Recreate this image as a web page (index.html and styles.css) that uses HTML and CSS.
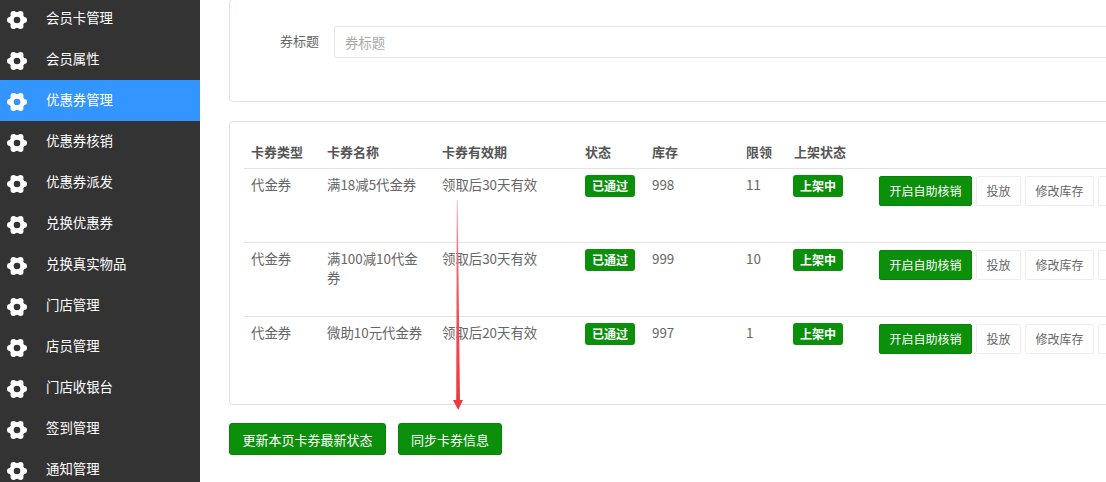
FILE: index.html
```html
<!DOCTYPE html>
<html lang="zh-CN">
<head>
<meta charset="utf-8">
<title>优惠券管理</title>
<link rel="stylesheet" href="styles.css">
</head>
<body>
<svg class="defs" width="0" height="0" aria-hidden="true">
  <symbol id="gear" viewBox="0 0 20 20">
    <circle cx="10" cy="10" r="5.6" fill="none" stroke="#fff" stroke-width="4.6"/>
    <circle cx="17" cy="10" r="3" fill="#fff"/>
    <circle cx="3" cy="10" r="3" fill="#fff"/>
    <circle cx="13.5" cy="3.94" r="3" fill="#fff"/>
    <circle cx="6.5" cy="3.94" r="3" fill="#fff"/>
    <circle cx="13.5" cy="16.06" r="3" fill="#fff"/>
    <circle cx="6.5" cy="16.06" r="3" fill="#fff"/>
  </symbol>
</svg>
<div class="layout">
  <nav class="sidebar">
    <a class="nav-item"><svg class="nav-icon"><use href="#gear"/></svg>会员卡管理</a>
    <a class="nav-item"><svg class="nav-icon"><use href="#gear"/></svg>会员属性</a>
    <a class="nav-item active"><svg class="nav-icon"><use href="#gear"/></svg>优惠券管理</a>
    <a class="nav-item"><svg class="nav-icon"><use href="#gear"/></svg>优惠券核销</a>
    <a class="nav-item"><svg class="nav-icon"><use href="#gear"/></svg>优惠券派发</a>
    <a class="nav-item"><svg class="nav-icon"><use href="#gear"/></svg>兑换优惠券</a>
    <a class="nav-item"><svg class="nav-icon"><use href="#gear"/></svg>兑换真实物品</a>
    <a class="nav-item"><svg class="nav-icon"><use href="#gear"/></svg>门店管理</a>
    <a class="nav-item"><svg class="nav-icon"><use href="#gear"/></svg>店员管理</a>
    <a class="nav-item"><svg class="nav-icon"><use href="#gear"/></svg>门店收银台</a>
    <a class="nav-item"><svg class="nav-icon"><use href="#gear"/></svg>签到管理</a>
    <a class="nav-item"><svg class="nav-icon"><use href="#gear"/></svg>通知管理</a>
  </nav>
  <main class="content">
    <section class="panel panel-form">
      <div class="form-row">
        <label class="form-label">券标题</label>
        <input class="form-input" type="text" placeholder="券标题">
      </div>
    </section>
    <section class="panel panel-table">
      <table class="coupons">
        <colgroup>
          <col class="c-type"><col class="c-name"><col class="c-valid"><col class="c-status"><col class="c-stock"><col class="c-limit"><col class="c-shelf"><col>
        </colgroup>
        <thead>
          <tr><th>卡券类型</th><th>卡券名称</th><th>卡券有效期</th><th>状态</th><th>库存</th><th>限领</th><th>上架状态</th><th></th></tr>
        </thead>
        <tbody>
          <tr>
            <td>代金券</td><td>满18减5代金券</td><td>领取后30天有效</td>
            <td><span class="badge">已通过</span></td><td>998</td><td>11</td>
            <td><span class="badge">上架中</span></td>
            <td><div class="actions"><button class="btn btn-green">开启自助核销</button><button class="btn">投放</button><button class="btn">修改库存</button><button class="btn btn-cut"></button></div></td>
          </tr>
          <tr>
            <td>代金券</td><td>满100减10代金券</td><td>领取后30天有效</td>
            <td><span class="badge">已通过</span></td><td>999</td><td>10</td>
            <td><span class="badge">上架中</span></td>
            <td><div class="actions"><button class="btn btn-green">开启自助核销</button><button class="btn">投放</button><button class="btn">修改库存</button><button class="btn btn-cut"></button></div></td>
          </tr>
          <tr>
            <td>代金券</td><td>微助10元代金券</td><td>领取后20天有效</td>
            <td><span class="badge">已通过</span></td><td>997</td><td>1</td>
            <td><span class="badge">上架中</span></td>
            <td><div class="actions"><button class="btn btn-green">开启自助核销</button><button class="btn">投放</button><button class="btn">修改库存</button><button class="btn btn-cut"></button></div></td>
          </tr>
        </tbody>
      </table>
    </section>
    <div class="page-actions">
      <button class="btn-page">更新本页卡券最新状态</button>
      <button class="btn-page">同步卡券信息</button>
    </div>
  </main>
</div>
<svg class="arrow" width="1106" height="482" aria-hidden="true">
  <defs>
    <linearGradient id="shaft" x1="0" y1="200" x2="0" y2="400" gradientUnits="userSpaceOnUse">
      <stop offset="0" stop-color="#f5a9b0"/>
      <stop offset="0.35" stop-color="#ef5f68"/>
      <stop offset="1" stop-color="#ea3a42"/>
    </linearGradient>
  </defs>
  <polygon points="456.8,200 457.6,200 460,401 456.2,401" fill="url(#shaft)"/>
  <polygon points="453,400 463,400 458.2,410" fill="#ea3a42"/>
</svg>
</body>
</html>
```
FILE: styles.css
```css
* { box-sizing: border-box; }
html, body { margin: 0; padding: 0; height: 100%; overflow: hidden; background: #fff; }
body {
  font-family: "Noto Sans CJK SC", "Noto Sans", sans-serif;
  font-size: 14px;
  color: #666;
  position: relative;
}
.defs { position: absolute; }
.layout { display: flex; height: 482px; overflow: hidden; }

.sidebar {
  width: 200px;
  flex: none;
  background: #333;
  overflow: hidden;
  margin-top: -2px;
  height: 484px;
}
.nav-item {
  display: flex;
  align-items: center;
  height: 41px;
  padding-bottom: 4px;
  color: #fff;
  font-size: 13.4px;
}
.nav-item.active { background: #3396ff; }
.nav-icon { width: 20px; height: 20px; margin: 7px 19px 0 7px; flex: none; }

.content { flex: 1; min-width: 0; overflow: hidden; padding-left: 29px; }
.panel { width: 1000px; background: #fff; border-radius: 4px; }
.panel-form {
  height: 103px;
  margin-top: -1px;
  border: 1px solid #d3e8ec;
  padding: 26px 0 0 0;
}
.form-row { display: flex; align-items: center; }
.form-label { width: 89px; text-align: right; margin-right: 15px; padding-bottom: 3px; font-size: 13px; line-height: 20px; }
.form-input {
  flex: 1;
  height: 32px;
  border: 1px solid #e5e6e7;
  border-radius: 2px;
  padding: 0 10px 1px;
  font: inherit;
  font-size: 13.4px;
  color: #666;
  outline: none;
}
.form-input::placeholder { color: #a9a9a9; opacity: 1; }

.panel-table {
  height: 284px;
  margin-top: 19px;
  border: 1px solid #e1e1e1;
  padding: 0 14px;
}
.coupons { width: 100%; border-collapse: collapse; table-layout: fixed; }
.c-type { width: 76px; }
.c-name { width: 115px; }
.c-valid { width: 143px; }
.c-status { width: 66px; }
.c-stock { width: 94px; }
.c-limit { width: 48px; }
.c-shelf { width: 85px; }
.coupons th {
  height: 46px;
  padding: 0 8px 6px;
  text-align: left;
  vertical-align: bottom;
  font-size: 13px;
  font-weight: 700;
  line-height: 20px;
  color: #555;
  border-bottom: 1px solid #e3e3e3;
}
.coupons td {
  height: 74px;
  padding: 6px 8px 0;
  vertical-align: top;
  font-size: 13.4px;
  line-height: 19px;
  border-top: 1px solid #e3e3e3;
}
.coupons th:nth-child(-n+4),
.coupons td:nth-child(-n+3) { padding-left: 7px; }
.coupons tbody tr:first-child td { border-top: 0; }
.badge {
  display: inline-block;
  width: 50px;
  height: 22px;
  margin-left: -1px;
  background: #0c8f0a;
  border-radius: 3px;
  color: #fff;
  font-size: 12px;
  font-weight: 700;
  line-height: 21px;
  text-align: center;
}
.actions { display: flex; gap: 4px; margin-top: 1px; white-space: nowrap; }
.btn {
  height: 30px;
  padding: 0 9.5px;
  border: 1px solid #eee;
  border-radius: 2px;
  background: #fff;
  color: #666;
  font: inherit;
  font-size: 12px;
  flex: none;
}
.btn-cut { width: 45px; }
.btn-green { background: #0c8f0a; border-color: #0a820a; color: #fff; }
.page-actions { display: flex; gap: 12px; margin-top: 18px; }
.btn-page {
  height: 32px;
  padding: 0 12px;
  border: 1px solid #0a820a;
  border-radius: 3px;
  background: #0c8f0a;
  color: #fff;
  font: inherit;
  font-size: 13px;
}
.btn-page:first-child { padding: 0 12.5px; }
.arrow { position: absolute; left: 0; top: 0; pointer-events: none; }
```
